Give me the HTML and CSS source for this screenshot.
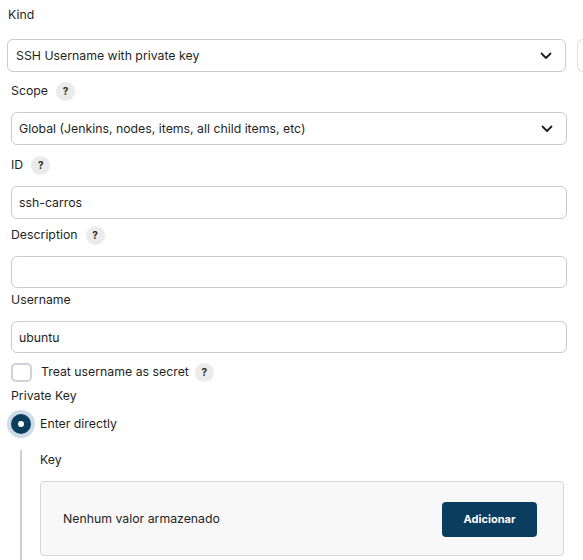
FILE: index.html
```html
<!DOCTYPE html>
<html lang="pt">
<head>
<meta charset="utf-8">
<title>Credentials</title>
<link rel="stylesheet" href="styles.css">
</head>
<body>
<div class="form">
  <div class="field kind">
    <div class="label-row"><span class="label">Kind</span></div>
    <div class="kind-row">
      <div class="select">
        <span>SSH Username with private key</span>
        <svg class="chev" width="12" height="8" viewBox="0 0 12 8"><polyline points="1.5,1.5 6,6 10.5,1.5" fill="none" stroke="#1f1f1f" stroke-width="1.8" stroke-linecap="round" stroke-linejoin="round"/></svg>
      </div>
      <div class="stub"></div>
    </div>
  </div>

  <div class="field scope">
    <div class="label-row"><span class="label">Scope</span><span class="help">?</span></div>
    <div class="select">
      <span>Global (Jenkins, nodes, items, all child items, etc)</span>
      <svg class="chev" width="12" height="8" viewBox="0 0 12 8"><polyline points="1.5,1.5 6,6 10.5,1.5" fill="none" stroke="#1f1f1f" stroke-width="1.8" stroke-linecap="round" stroke-linejoin="round"/></svg>
    </div>
  </div>

  <div class="field id">
    <div class="label-row"><span class="label">ID</span><span class="help">?</span></div>
    <div class="input">ssh-carros</div>
  </div>

  <div class="field desc">
    <div class="label-row"><span class="label">Description</span><span class="help">?</span></div>
    <div class="input"></div>
  </div>

  <div class="field user">
    <div class="label-row"><span class="label">Username</span></div>
    <div class="input">ubuntu</div>
  </div>

  <div class="check-row">
    <span class="checkbox"></span>
    <span class="label">Treat username as secret</span>
    <span class="help">?</span>
  </div>

  <div class="label-row pk"><span class="label">Private Key</span></div>

  <div class="radio-row">
    <span class="radio"></span>
    <span class="label">Enter directly</span>
  </div>

  <div class="nested">
    <div class="label-row key"><span class="label">Key</span></div>
    <div class="keybox">
      <span>Nenhum valor armazenado</span>
      <button class="btn">Adicionar</button>
    </div>
  </div>
</div>
</body>
</html>
```

FILE: styles.css
```css
html, body {
  margin: 0;
  padding: 0;
  background: #fff;
  overflow: hidden;
}
body {
  font-family: Inter, "Noto Sans", "Liberation Sans", sans-serif;
  font-size: 12.3px;
  color: #1f1f1f;
  width: 583px;
  height: 560px;
}
.form {
  padding: 5px 0 0 11px;
  width: 556px;
}
.label-row {
  display: flex;
  align-items: center;
  gap: 8px;
  height: 20px;
}
.label {
  line-height: 16px;
}
.help {
  width: 19px;
  height: 19px;
  border-radius: 50%;
  background: #ebebeb;
  font-size: 10px;
  font-weight: 700;
  display: flex;
  align-items: center;
  justify-content: center;
  color: #2a2a2a;
}
.select, .input {
  box-sizing: border-box;
  height: 33px;
  border: 1px solid #c5cbd0;
  border-radius: 6px;
  display: flex;
  align-items: center;
  padding: 0 7px;
  background: #fff;
}
.select {
  justify-content: space-between;
  padding-right: 13px;
}
.chev { display: block; }

.kind { margin-left: -4px; width: 600px; }
.kind .label-row { padding-left: 1px; }
.kind-row {
  display: flex;
  gap: 11px;
  margin-top: 14px;
}
.kind .select { width: 564px; padding-left: 8px; }
.stub {
  width: 30px;
  height: 33px;
  box-sizing: border-box;
  border: 1px solid #dde1e4;
  border-right: 0;
  border-radius: 6px 0 0 6px;
}

.scope { margin-top: 9px; }
.scope .select { margin-top: 11px; }
.id { margin-top: 10px; }
.id .input { margin-top: 11px; }
.desc { margin-top: 6px; }
.desc .input { margin-top: 11px; height: 32px; }
.user { margin-top: 2px; }
.user .input { margin-top: 11px; height: 32px; }

.check-row {
  display: flex;
  align-items: center;
  height: 20px;
  margin-top: 9px;
}
.checkbox {
  box-sizing: border-box;
  width: 21px;
  height: 19px;
  border: 2px solid #cdd3d7;
  border-radius: 5px;
  margin-right: 9px;
}
.check-row .help { margin-left: 6px; }

.pk { margin-top: 4px; }

.radio-row {
  display: flex;
  align-items: center;
  height: 28px;
  margin-top: 4px;
}
.radio {
  box-sizing: border-box;
  width: 20px;
  height: 20px;
  border-radius: 50%;
  background: #0b3d5e;
  box-shadow: 0 0 0 4px #cddce7;
  display: flex;
  align-items: center;
  justify-content: center;
  margin-right: 9px;
}
.radio::after {
  content: "";
  width: 6px;
  height: 6px;
  border-radius: 50%;
  background: #fff;
}

.nested {
  margin-top: 14px;
  margin-left: 9px;
  border-left: 2px solid #c9cfd4;
  padding-left: 18px;
  padding-bottom: 20px;
}
.key { margin-top: -2px; }
.keybox {
  box-sizing: border-box;
  margin-top: 11px;
  width: 524px;
  height: 75px;
  background: #f8f8f8;
  border: 1px solid #d3d8dc;
  border-radius: 4px;
  display: flex;
  align-items: center;
  justify-content: space-between;
  padding: 0 26px 0 22px;
}
.btn {
  width: 95px;
  height: 35px;
  background: #0b3d5e;
  color: #fff;
  border: 0;
  border-radius: 4px;
  font-family: Inter, "Noto Sans", "Liberation Sans", sans-serif;
  font-size: 11px;
  font-weight: 700;
  margin-top: 1px;
}
```
